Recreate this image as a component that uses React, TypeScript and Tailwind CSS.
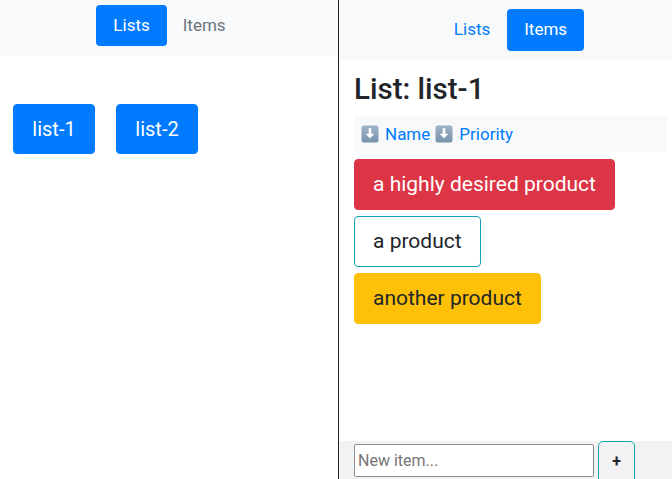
import React from "react"

function DownEmoji() {
  return (
    <svg width="18" height="18" viewBox="0 0 18 18" className="inline-block align-[-3px] mr-[6px]">
      <defs>
        <linearGradient id="dg" x1="0" y1="0" x2="0" y2="1">
          <stop offset="0" stopColor="#9fb4c8" />
          <stop offset="1" stopColor="#7792ac" />
        </linearGradient>
      </defs>
      <rect x="0.5" y="0.5" width="17" height="17" rx="2" fill="url(#dg)" />
      <path d="M9 3.2 V11.5" stroke="#fff" strokeWidth="2.6" />
      <path d="M4.7 8.8 L9 13.6 L13.3 8.8 Z" fill="#fff" />
    </svg>
  )
}

const items = [
  { name: "a highly desired product", cls: "bg-[#dc3545] border-[#dc3545] text-white" },
  { name: "a product", cls: "bg-white border-[#17a2b8] text-[#212529]" },
  { name: "another product", cls: "bg-[#ffc107] border-[#ffc107] text-[#212529]" },
]

export default function App() {
  return (
    <div
      className="w-[672px] h-[479px] overflow-hidden flex bg-white"
      style={{ fontFamily: "Roboto, 'Noto Sans', Arial, sans-serif" }}
    >
      {/* lists pane */}
      <div className="w-[339px] shrink-0 border-r border-[#222] flex flex-col">
        <nav className="h-[56px] bg-[#f8f9fa] flex justify-center items-start pt-[5px] text-[17px]">
          <span className="h-[41px] px-[17px] flex items-center rounded-[4px] bg-[#007bff] text-white">Lists</span>
          <span className="h-[41px] px-[16px] flex items-center text-[#6c757d]">Items</span>
        </nav>
        <div className="flex gap-[21px] px-[13px] pt-[48px]">
          <button className="w-[82px] h-[50px] flex items-center justify-center rounded-[4px] border border-[#007bff] bg-[#007bff] text-white text-[20px]">list-1</button>
          <button className="w-[82px] h-[50px] flex items-center justify-center rounded-[4px] border border-[#007bff] bg-[#007bff] text-white text-[20px]">list-2</button>
        </div>
      </div>

      {/* items pane */}
      <div className="w-[343px] h-[485px] shrink-0 flex flex-col">
        <nav className="h-[60px] bg-[#f8f9fa] flex justify-center items-start pt-[9px] text-[17px]">
          <span className="h-[42px] px-[17px] flex items-center text-[#007bff]">Lists</span>
          <span className="h-[42px] px-[17px] flex items-center rounded-[4px] bg-[#007bff] text-white">Items</span>
        </nav>
        <div className="flex-1 px-[15px]">
          <h3 className="text-[29.5px] font-medium text-[#212529] leading-[1.2] mt-[12px] mb-[9px]">List: list-1</h3>
          <div className="h-[36px] bg-[#f8f9fa] flex items-center px-[7px] text-[17px] text-[#007bff]">
            <DownEmoji />
            <span className="mr-[5px]">Name</span>
            <DownEmoji />
            <span>Priority</span>
          </div>
          <div className="flex flex-col items-start gap-[6px] mt-[7px]">
            {items.map((it) => (
              <div key={it.name} className={`h-[51px] px-[18px] flex items-center rounded-[4px] border text-[21px] ${it.cls}`}>
                {it.name}
              </div>
            ))}
          </div>
        </div>
        <div className="h-[44px] bg-[#f2f2f2] flex items-start gap-[4px] px-[15px]">
          <input
            placeholder="New item..."
            className="mt-[3px] w-[240px] h-[33px] px-[3px] border border-[#8f8f8f] rounded-[2px] bg-white text-[16px] placeholder:text-[#757575] outline-none"
          />
          <button className="w-[37px] h-[42px] rounded-[5px] border border-[#17a2b8] text-[#212529] font-bold text-[16px]">+</button>
        </div>
      </div>
    </div>
  )
}
